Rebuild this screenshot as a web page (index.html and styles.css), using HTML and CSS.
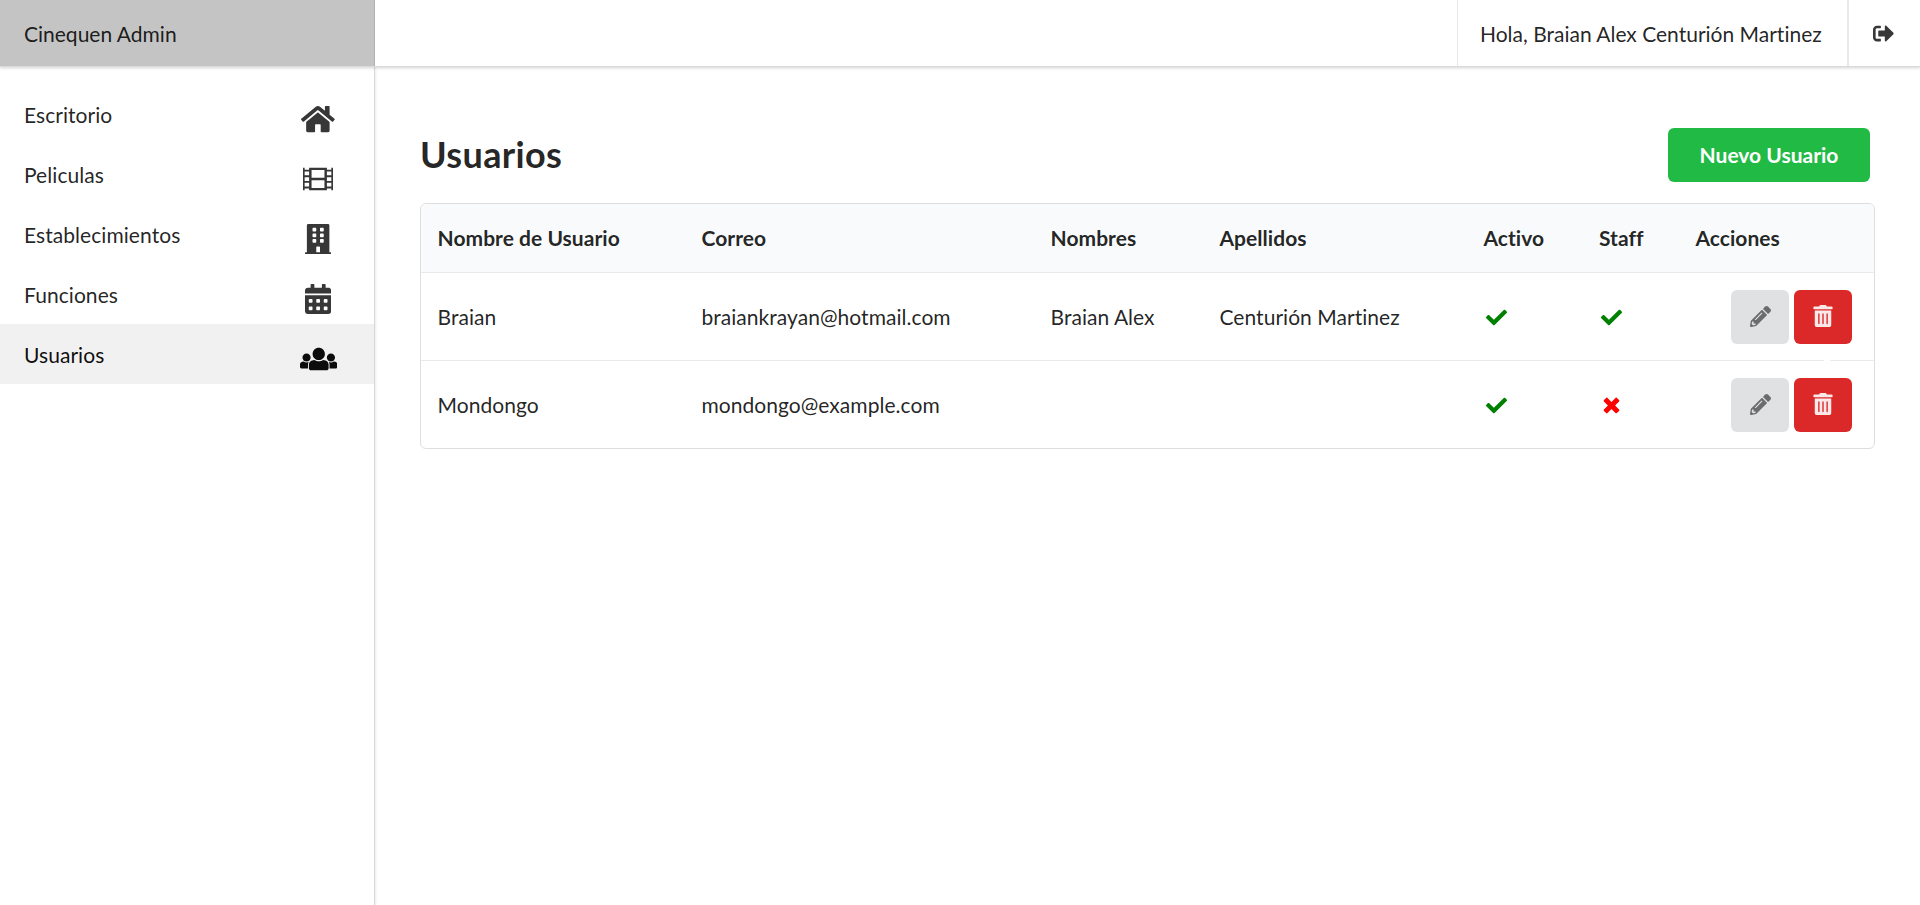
FILE: index.html
```html
<!DOCTYPE html>
<html lang="es">
<head>
<meta charset="utf-8">
<title>Cinequen Admin</title>
<link rel="stylesheet" href="styles.css">
</head>
<body>
<svg class="sprite" aria-hidden="true">
  <symbol id="pencil" viewBox="0 0 512 512"><path fill-rule="evenodd" d="M497.900 142.100l-46.100 46.100c-4.700 4.700-12.300 4.700-17 0l-111-111c-4.700-4.700-4.700-12.300 0-17l46.100-46.100c18.700-18.700 49.100-18.700 67.900 0l60.100 60.100c18.800 18.700 18.800 49.100 0 67.900zM284.200 99.800L21.600 362.400.4 483.900c-2.900 16.400 11.400 30.600 27.800 27.800l121.500-21.300 262.600-262.600c4.700-4.700 4.700-12.300 0-17l-111-111c-4.800-4.700-12.400-4.700-17.100 0zM124.100 339.900c-5.500-5.500-5.500-14.300 0-19.800l154-154c5.500-5.500 14.300-5.500 19.800 0s5.500 14.300 0 19.800l-154 154c-5.500 5.500-14.300 5.500-19.800 0zM88 424h48v36.300l-64.500 11.300-31.100-31.100L51.700 376H88v48z"/></symbol>
  <symbol id="trash" viewBox="0 0 448 512"><path d="M0 84V56c0-13.300 10.700-24 24-24h112l9.400-18.700c4-8.200 12.300-13.300 21.400-13.300h114.300c9.100 0 17.400 5.100 21.500 13.300L312 32h112c13.300 0 24 10.700 24 24v28c0 6.600-5.400 12-12 12H12C5.400 96 0 90.600 0 84zm416 56v324c0 26.500-21.500 48-48 48H80c-26.500 0-48-21.500-48-48V140c0-6.600 5.400-12 12-12h360c6.600 0 12 5.400 12 12zm-272 68c0-8.800-7.200-16-16-16s-16 7.200-16 16v224c0 8.800 7.200 16 16 16s16-7.200 16-16V208zm96 0c0-8.800-7.200-16-16-16s-16 7.200-16 16v224c0 8.800 7.200 16 16 16s16-7.200 16-16V208zm96 0c0-8.800-7.200-16-16-16s-16 7.200-16 16v224c0 8.800 7.200 16 16 16s16-7.200 16-16V208z"/></symbol>
  <symbol id="check" viewBox="0 0 512 512"><path d="M173.898 439.404l-166.400-166.400c-9.997-9.997-9.997-26.206 0-36.204l36.203-36.204c9.997-9.998 26.207-9.998 36.204 0L192 312.690 432.095 72.596c9.997-9.997 26.207-9.997 36.204 0l36.203 36.204c9.997 9.997 9.997 26.206 0 36.204l-294.400 294.401c-9.998 9.997-26.207 9.997-36.204-.001z"/></symbol>
  <symbol id="times" viewBox="0 0 384 512"><path d="M323.100 441l53.900-53.900c9.400-9.400 9.400-24.500 0-33.900L279.800 256l97.200-97.200c9.400-9.400 9.400-24.500 0-33.900L323.100 71c-9.400-9.400-24.500-9.400-33.900 0L192 168.200 94.800 71c-9.400-9.400-24.500-9.400-33.900 0L7 124.900c-9.400 9.400-9.400 24.500 0 33.900l97.200 97.200L7 353.200c-9.400 9.400-9.400 24.500 0 33.900L60.900 441c9.400 9.400 24.500 9.400 33.900 0l97.200-97.200 97.200 97.200c9.300 9.300 24.500 9.300 33.900 0z"/></symbol>
</svg>
<header class="topbar">
  <a class="brand">Cinequen Admin</a>
  <div class="session">
    <span class="greeting">Hola, Braian Alex Centurión Martinez</span>
    <a class="logout"><svg class="icon-logout" viewBox="0 0 512 512"><path d="M497 273L329 441c-15 15-41 4.500-41-17v-96H152c-13.300 0-24-10.700-24-24v-96c0-13.300 10.700-24 24-24h136V88c0-21.400 25.900-32 41-17l168 168c9.300 9.400 9.300 24.600 0 34zM192 436v-40c0-6.600-5.400-12-12-12H96c-17.700 0-32-14.300-32-32V160c0-17.700 14.300-32 32-32h84c6.600 0 12-5.400 12-12V76c0-6.600-5.400-12-12-12H96c-53 0-96 43-96 96v192c0 53 43 96 96 96h84c6.600 0 12-5.400 12-12z"/></svg></a>
  </div>
</header>
<div class="layout">
  <nav class="sidebar">
    <a class="nav-item">Escritorio<span class="nav-icon"><svg viewBox="0 0 576 512" width="33.75" height="30"><path d="M488 312.700V456c0 13.300-10.700 24-24 24H348c-6.600 0-12-5.400-12-12V356c0-6.600-5.400-12-12-12h-72c-6.600 0-12 5.400-12 12v112c0 6.600-5.400 12-12 12H112c-13.300 0-24-10.700-24-24V312.700c0-3.600 1.600-7 4.400-9.300l188-154.800c4.400-3.600 10.800-3.600 15.300 0l188 154.800c2.700 2.300 4.300 5.700 4.300 9.300zm83.600-60.900L488 182.900V44.400c0-6.600-5.400-12-12-12h-56c-6.600 0-12 5.400-12 12V117l-89.500-73.700c-17.700-14.600-43.300-14.600-61 0L4.400 251.800c-5.100 4.200-5.800 11.800-1.600 16.900l25.500 31c4.200 5.100 11.800 5.800 16.900 1.600l235.200-193.700c4.400-3.600 10.800-3.600 15.300 0l235.200 193.700c5.100 4.200 12.700 3.500 16.900-1.600l25.500-31c4.200-5.200 3.400-12.700-1.700-16.900z"/></svg></span></a>
    <a class="nav-item">Peliculas<span class="nav-icon"><svg viewBox="0 0 512 512" width="30" height="30"><path fill-rule="evenodd" d="M0 64h28v32h76V64h304v32h76V64h28v384h-28v-32h-76v32H104v-32H28v32H0zM28 128v64h76v-64zM28 224v64h76v-64zM28 320v64h76v-64zM408 128v64h76v-64zM408 224v64h76v-64zM408 320v64h76v-64zM146 102v134h220V102zM146 276v134h220V276z"/></svg></span></a>
    <a class="nav-item">Establecimientos<span class="nav-icon"><svg viewBox="0 0 448 512" width="26.25" height="30"><path d="M436 480h-20V24c0-13.255-10.745-24-24-24H56C42.745 0 32 10.745 32 24v456H12c-6.627 0-12 5.373-12 12v20h448v-20c0-6.627-5.373-12-12-12zM128 76c0-6.627 5.373-12 12-12h40c6.627 0 12 5.373 12 12v40c0 6.627-5.373 12-12 12h-40c-6.627 0-12-5.373-12-12V76zm0 96c0-6.627 5.373-12 12-12h40c6.627 0 12 5.373 12 12v40c0 6.627-5.373 12-12 12h-40c-6.627 0-12-5.373-12-12v-40zm52 148h-40c-6.627 0-12-5.373-12-12v-40c0-6.627 5.373-12 12-12h40c6.627 0 12 5.373 12 12v40c0 6.627-5.373 12-12 12zm76 160h-64v-84c0-6.627 5.373-12 12-12h40c6.627 0 12 5.373 12 12v84zm64-172c0 6.627-5.373 12-12 12h-40c-6.627 0-12-5.373-12-12v-40c0-6.627 5.373-12 12-12h40c6.627 0 12 5.373 12 12v40zm0-96c0 6.627-5.373 12-12 12h-40c-6.627 0-12-5.373-12-12v-40c0-6.627 5.373-12 12-12h40c6.627 0 12 5.373 12 12v40zm0-96c0 6.627-5.373 12-12 12h-40c-6.627 0-12-5.373-12-12V76c0-6.627 5.373-12 12-12h40c6.627 0 12 5.373 12 12v40z"/></svg></span></a>
    <a class="nav-item">Funciones<span class="nav-icon"><svg viewBox="0 0 448 512" width="26.25" height="30"><path d="M0 464c0 26.500 21.500 48 48 48h352c26.500 0 48-21.500 48-48V192H0v272zm320-196c0-6.600 5.400-12 12-12h40c6.600 0 12 5.400 12 12v40c0 6.600-5.400 12-12 12h-40c-6.600 0-12-5.400-12-12v-40zm0 128c0-6.600 5.400-12 12-12h40c6.600 0 12 5.400 12 12v40c0 6.600-5.400 12-12 12h-40c-6.600 0-12-5.400-12-12v-40zM192 268c0-6.600 5.400-12 12-12h40c6.600 0 12 5.400 12 12v40c0 6.600-5.400 12-12 12h-40c-6.600 0-12-5.400-12-12v-40zm0 128c0-6.600 5.400-12 12-12h40c6.600 0 12 5.400 12 12v40c0 6.600-5.400 12-12 12h-40c-6.600 0-12-5.400-12-12v-40zM64 268c0-6.600 5.400-12 12-12h40c6.600 0 12 5.400 12 12v40c0 6.600-5.400 12-12 12H76c-6.600 0-12-5.400-12-12v-40zm0 128c0-6.600 5.400-12 12-12h40c6.600 0 12 5.400 12 12v40c0 6.600-5.400 12-12 12H76c-6.600 0-12-5.400-12-12v-40zM400 64h-48V16c0-8.800-7.200-16-16-16h-32c-8.800 0-16 7.200-16 16v48H160V16c0-8.800-7.200-16-16-16h-32c-8.800 0-16 7.200-16 16v48H48C21.500 64 0 85.500 0 112v48h448v-48c0-26.500-21.500-48-48-48z"/></svg></span></a>
    <a class="nav-item active">Usuarios<span class="nav-icon"><svg viewBox="0 0 640 512" width="37.5" height="30"><path d="M320 64c57.990 0 105 47.010 105 105s-47.010 105-105 105-105-47.010-105-105S262.010 64 320 64zm113.463 217.366l-39.982-9.996c-49.168 35.365-108.766 27.473-146.961 0l-39.982 9.996C174.485 289.379 152 318.177 152 351.216V412c0 19.882 16.118 36 36 36h264c19.882 0 36-16.118 36-36v-60.784c0-33.039-22.485-61.837-54.537-69.850zM528 300c38.660 0 70-31.340 70-70s-31.340-70-70-70-70 31.340-70 70 31.340 70 70 70zm-416 0c38.660 0 70-31.340 70-70s-31.340-70-70-70-70 31.340-70 70 31.340 70 70 70zm24 112v-60.784c0-16.551 4.593-32.204 12.703-45.599-29.988 14.720-63.336 8.708-85.690-7.370l-26.655 6.664C14.990 310.252 0 329.452 0 351.477V392c0 13.255 10.745 24 24 24h112.169a52.417 52.417 0 0 1-.169-4zm467.642-107.090l-26.655-6.664c-27.925 20.086-60.890 19.233-85.786 7.218C499.369 318.893 504 334.601 504 351.216V412c0 1.347-.068 2.678-.169 4H616c13.255 0 24-10.745 24-24v-40.523c0-22.025-14.990-41.225-36.358-46.567z"/></svg></span></a>
  </nav>
  <main class="content">
    <div class="page-head">
      <h1 class="page-title">Usuarios</h1>
      <button class="button primary">Nuevo Usuario</button>
    </div>
    <div class="table">
      <div class="row head">
        <span>Nombre de Usuario</span><span>Correo</span><span>Nombres</span><span>Apellidos</span><span>Activo</span><span>Staff</span><span>Acciones</span>
      </div>
      <div class="row">
        <span>Braian</span><span>braiankrayan@hotmail.com</span><span>Braian Alex</span><span>Centurión Martinez</span>
        <span class="flag yes"><svg><use href="#check"/></svg></span>
        <span class="flag yes"><svg><use href="#check"/></svg></span>
        <span class="actions"><button class="button edit"><svg><use href="#pencil"/></svg></button><button class="button delete"><svg><use href="#trash"/></svg></button></span>
      </div>
      <div class="row notched">
        <span>Mondongo</span><span>mondongo@example.com</span><span></span><span></span>
        <span class="flag yes"><svg><use href="#check"/></svg></span>
        <span class="flag no"><svg><use href="#times"/></svg></span>
        <span class="actions"><button class="button edit"><svg><use href="#pencil"/></svg></button><button class="button delete"><svg><use href="#trash"/></svg></button></span>
      </div>
    </div>
  </main>
</div>
</body>
</html>
```
FILE: styles.css
```css
* { box-sizing: border-box; }
body {
  margin: 0;
  height: 905px;
  display: flex;
  flex-direction: column;
  overflow: hidden;
  background: #fff;
  color: rgba(0, 0, 0, .87);
  font: 21px/30px Lato, "Liberation Sans", sans-serif;
  font-variant-ligatures: none;
}
svg { display: block; fill: currentColor; }
.sprite { display: none; }

.topbar {
  position: relative;
  z-index: 1;
  flex: none;
  display: flex;
  justify-content: space-between;
  height: 67px;
  border-bottom: 1px solid #dadada;
  box-shadow: 0 1px 3px rgba(34, 36, 38, .2);
  background: #fff;
}
.brand {
  display: flex;
  align-items: center;
  width: 375px;
  padding: 1px 24px 0;
  border-right: 1px solid #b0b0b0;
  background: #c4c4c4;
}
.session { display: flex; }
.greeting {
  display: flex;
  align-items: center;
  width: 390px;
  padding: 1px 0 0 22px;
  border-left: 1px solid #e8e8e8;
  white-space: nowrap;
}
.logout {
  width: 73px;
  padding: 22.500px 0 0 24px;
  border-left: 2px solid #e8e8e8;
  color: #373737;
}
.icon-logout { width: 21px; height: 21px; }

.layout { flex: 1; display: flex; }
.sidebar {
  width: 375px;
  padding-top: 17px;
  border-right: 1px solid #d8d8d8;
  box-shadow: 0 1px 3px rgba(34, 36, 38, .15);
}
.nav-item {
  display: flex;
  justify-content: space-between;
  height: 60px;
  padding: 16px 32px 0 24px;
  letter-spacing: .06px;
}
.nav-icon { display: flex; justify-content: center; width: 48px; padding-top: 4px; color: #373737; }
.active { background: #f1f1f1; color: rgba(0, 0, 0, .95); }
.active .nav-icon { padding-left: 1px; color: #0c0c0c; }

.content { flex: 1; padding: 61px 45px 0; }
.page-head { display: flex; justify-content: space-between; padding-right: 5px; }
.page-title { margin: 3px 0 0; font-size: 36px; line-height: 46px; font-weight: 700; letter-spacing: .35px; }
.button {
  height: 54px;
  padding: 0;
  border: 0;
  border-radius: 6px;
  font: 700 21px/21px Lato, "Liberation Sans", sans-serif;
}
.primary { width: 202px; padding-bottom: 2px; background: #21ba45; color: #fff; }

.table { margin-top: 21px; border: 1px solid #dededf; border-radius: 6px; overflow: hidden; }
.row {
  position: relative;
  display: grid;
  grid-template-columns: 264px 349px 169px 264px 115.500px 96.500px 1fr;
  align-items: center;
  height: 88px;
  padding-left: 16.500px;
  border-top: 1px solid #e8e9e9;
  letter-spacing: .04px;
}
.head { height: 68px; border-top: 0; background: #f9fafb; font-weight: 700; }
/* Small break in the divider under the delete button */
.notched::before {
  content: "";
  position: absolute;
  top: -1px;
  right: 44px;
  width: 6px;
  height: 1px;
  background: #fff;
}
.flag { padding: 1px 0 0 2px; }
.flag svg { width: 21px; height: 21px; }
.yes { color: green; }
.no { color: red; }
.actions { display: flex; justify-content: flex-end; gap: 5px; padding-right: 22px; }
.edit, .delete { display: flex; justify-content: center; width: 58px; padding-top: 1px; }
.edit { background: #e0e1e2; color: #6c6c6d; }
.delete { background: #db2828; color: #fbe9e9; }
.edit svg, .delete svg { width: 21px; height: 21px; margin-top: 15px; }
.delete svg { width: 22px; height: 22px; margin-top: 14px; }
```
